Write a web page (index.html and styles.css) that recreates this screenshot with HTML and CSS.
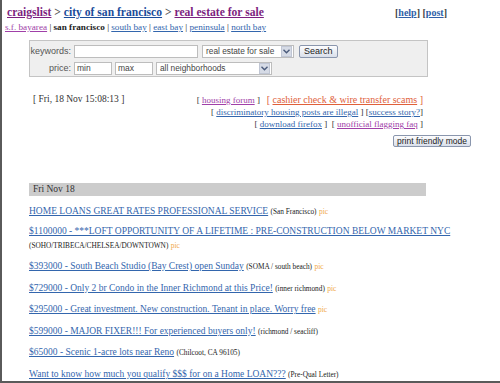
FILE: index.html
```html
<!DOCTYPE html>
<html>
<head>
<meta charset="utf-8">
<link rel="stylesheet" href="styles.css">
</head>
<body>
<div class="page">
  <div class="top">
    <div class="crumbs"><a class="visited">craigslist</a> &gt; <a class="dark">city of san francisco</a> &gt; <a class="visited">real estate for sale</a></div>
    <div class="toplinks">[<a>help</a>] [<a>post</a>]</div>
  </div>
  <div class="areas"><a class="pv">s.f. bayarea</a> | <b>san francisco</b> | <a>south bay</a> | <a>east bay</a> | <a>peninsula</a> | <a>north bay</a></div>

  <div class="search">
    <div class="row">
      <span class="lbl">keywords:</span>
      <span class="field kw"></span>
      <span class="sel sel1"><span class="seltxt">real estate for sale</span><span class="arrow"><svg width="7" height="5" viewBox="0 0 7 5"><path d="M0.5 0.8 L3.5 3.8 L6.5 0.8" fill="none" stroke="#4a5a7a" stroke-width="1.4"/></svg></span></span>
      <span class="btn">Search</span>
    </div>
    <div class="row">
      <span class="lbl">price:</span>
      <span class="field pr">min</span>
      <span class="field pr">max</span>
      <span class="sel sel2"><span class="seltxt">all neighborhoods</span><span class="arrow"><svg width="7" height="5" viewBox="0 0 7 5"><path d="M0.5 0.8 L3.5 3.8 L6.5 0.8" fill="none" stroke="#4a5a7a" stroke-width="1.4"/></svg></span></span>
    </div>
  </div>

  <div class="info">
    <div class="date">[ Fri, 18 Nov 15:08:13 ]</div>
    <div class="links">
      <div>[ <a class="pv">housing forum</a> ] &nbsp;&nbsp;<span class="scam">[ <a>cashier check &amp; wire transfer scams</a> ]</span></div>
      <div>[ <a>discriminatory housing posts are illegal</a> ] [<a>success story?</a>]</div>
      <div>[ <a>download firefox</a> ] &nbsp;[ <a class="pv">unofficial flagging faq</a> ]</div>
      <div class="pfrow"><span class="btn pf">print friendly mode</span></div>
    </div>
  </div>

  <div class="day">Fri Nov 18</div>

  <div class="list">
    <p><a>HOME LOANS GREAT RATES PROFESSIONAL SERVICE</a> <small>(San Francisco)</small> <span class="pic">pic</span></p>
    <p class="two"><a>$1100000 - ***LOFT OPPORTUNITY OF A LIFETIME : PRE-CONSTRUCTION BELOW MARKET NYC</a><span class="sub"><small>(SOHO/TRIBECA/CHELSEA/DOWNTOWN)</small> <span class="pic">pic</span></span></p>
    <p><a>$393000 - South Beach Studio (Bay Crest) open Sunday</a> <small>(SOMA / south beach)</small> <span class="pic">pic</span></p>
    <p><a>$729000 - Only 2 br Condo in the Inner Richmond at this Price!</a> <small>(inner richmond)</small> <span class="pic">pic</span></p>
    <p><a>$295000 - Great investment. New construction. Tenant in place. Worry free</a> <span class="pic">pic</span></p>
    <p><a>$599000 - MAJOR FIXER!!! For experienced buyers only!</a> <small>(richmond / seacliff)</small></p>
    <p><a>$65000 - Scenic 1-acre lots near Reno</a> <small>(Chilcoot, CA 96105)</small></p>
    <p><a>Want to know how much you qualify $$$ for on a Home LOAN???</a> <small>(Pre-Qual Letter)</small></p>
  </div>
</div>
</body>
</html>
```
FILE: styles.css
```css
html, body {
  margin: 0;
  padding: 0;
  background: #fff;
}
body {
  width: 500px;
  height: 383px;
  overflow: hidden;
}
.page {
  box-sizing: border-box;
  height: 383px;
  border-left: 2px solid #5a5a5a;
  border-bottom: 2px solid #5a5a5a;
  font-family: "Liberation Serif", "Times New Roman", serif;
  color: #222;
  padding: 0 0 0 5px;
  overflow: hidden;
}
a {
  color: #3366ad;
  text-decoration: underline;
}
a.visited {
  color: #7d1f80;
}
a.dark {
  color: #1b4c9a;
}
a.pv {
  color: #a040a8;
}
.top {
  display: flex;
  align-items: baseline;
  padding-top: 6px;
}
.crumbs {
  font-size: 11.6px;
  font-weight: bold;
  color: #555;
  width: 388px;
}
.toplinks {
  font-size: 10px;
  font-weight: bold;
  color: #444;
}
.toplinks a {
  color: #2f5fa8;
}
.areas {
  font-size: 9.2px;
  margin-top: 3px;
  margin-left: -2px;
  color: #222;
}
.search {
  margin: 8px 0 0 22px;
  width: 397px;
  height: 33px;
  border: 1px solid #c4c4c4;
  background: #efefef;
  padding: 2px 0 0 0;
  box-sizing: content-box;
  font-family: "Liberation Sans", Arial, sans-serif;
}
.row {
  display: flex;
  align-items: center;
  height: 16px;
  margin-bottom: 1px;
}
.lbl {
  width: 41px;
  text-align: right;
  font-size: 9px;
  color: #555;
  margin-right: 3px;
}
.field {
  box-sizing: border-box;
  height: 13px;
  border: 1px solid #bdbdbd;
  background: #fff;
  font-size: 8.5px;
  color: #444;
  padding: 0 2px;
  line-height: 11px;
  margin-right: 3px;
}
.kw { width: 124px; margin-right: 4px; }
.pr { width: 38px; }
.sel {
  box-sizing: border-box;
  height: 13px;
  border: 1px solid #bdbdbd;
  background: #fff;
  font-size: 8.3px;
  color: #444;
  display: flex;
  align-items: center;
  padding-left: 3px;
  justify-content: space-between;
  white-space: nowrap;
}
.sel1 { width: 92px; margin-right: 5px; }
.sel2 { width: 116px; }
.arrow {
  width: 9px;
  height: 9px;
  margin-right: 1px;
  background: #d6dbe6;
  border: 1px solid #c0c6d4;
  display: flex;
  align-items: center;
  justify-content: center;
  flex: none;
}
.btn {
  display: inline-block;
  box-sizing: border-box;
  height: 13px;
  padding: 0 4px;
  border: 1px solid #8a96ad;
  border-radius: 2px;
  background: linear-gradient(#fdfdfe, #d9dfea);
  font-family: "Liberation Sans", Arial, sans-serif;
  font-size: 9px;
  line-height: 11px;
  color: #222;
  white-space: nowrap;
}
.info {
  display: flex;
  margin-top: 17px;
  font-size: 9.5px;
}
.date {
  margin-left: 26px;
  width: 150px;
  color: #333;
}
.links {
  width: 240px;
  text-align: right;
  line-height: 12px;
  color: #333;
  font-size: 9px;
  white-space: nowrap;
}
.scam, .scam a {
  color: #e0603a;
  font-size: 10px;
}
.pfrow {
  margin-top: 5px;
  text-align: right;
  margin-right: -48px;
  line-height: 12px;
}
.btn.pf {
  width: 78px;
  height: 12px;
  padding: 0;
  text-align: center;
  font-size: 8.5px;
  line-height: 10px;
  vertical-align: top;
}
.day {
  margin: 36px 0 0 22px;
  width: 393px;
  height: 13px;
  background: #cccccc;
  font-size: 9.5px;
  line-height: 13px;
  padding-left: 4px;
  color: #333;
}
.list {
  margin-left: 22px;
  font-size: 9.5px;
}
.list p {
  margin: 6.6px 0 0 0;
  line-height: 15px;
}
.list p:first-child {
  margin-top: 8px;
}
.list p.two {
  margin-top: 5px;
}
.list .sub {
  display: block;
  margin: -1px 0 -0.6px 0;
}
.list small, .list .pic {
  line-height: 1;
}
.list small {
  font-size: 7.3px;
  color: #222;
}
.pic {
  font-size: 7.5px;
  color: #f0a848;
}
```
